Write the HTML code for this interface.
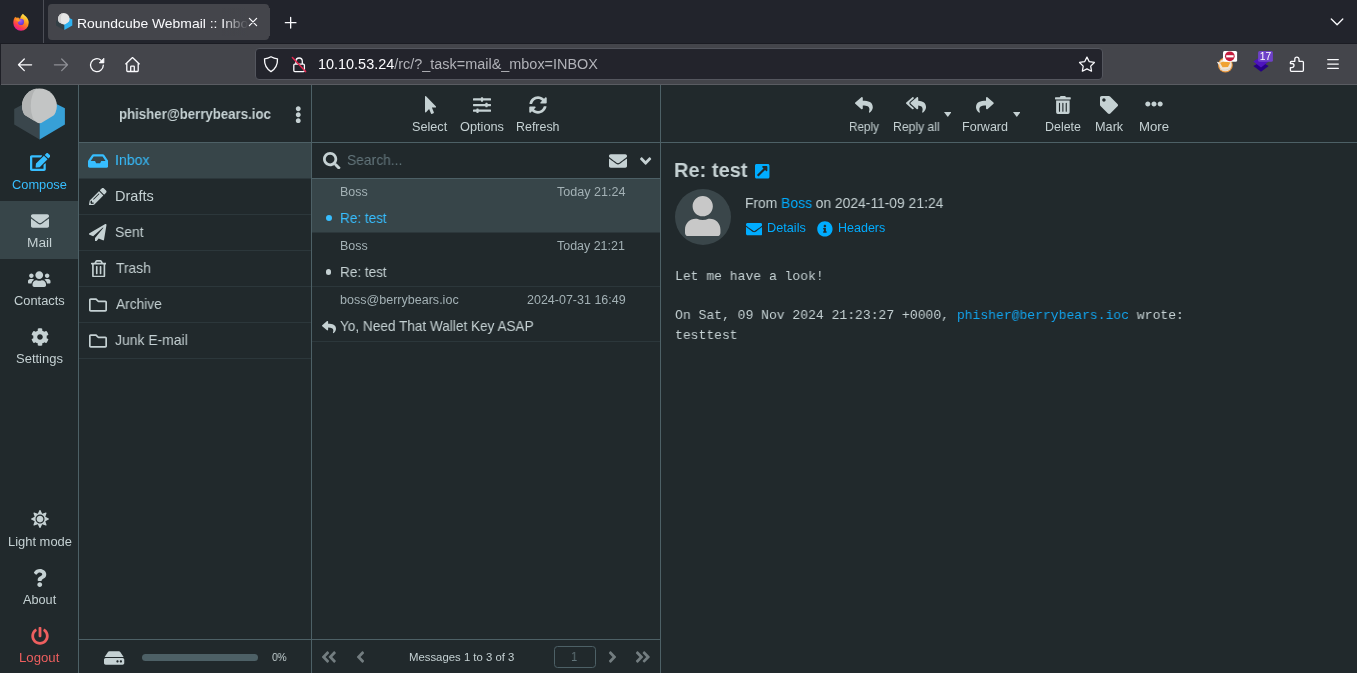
<!DOCTYPE html>
<html>
<head>
<meta charset="utf-8">
<title>Roundcube Webmail :: Inbox</title>
<style>
*{box-sizing:border-box;margin:0;padding:0}
html,body{width:1357px;height:673px;overflow:hidden;background:#21292c;font-family:"Liberation Sans",sans-serif;color:#c5d1d3}
.abs{position:absolute}
svg{display:block;position:absolute}
.tx{position:absolute;white-space:pre;transform-origin:0 0;will-change:transform}
#tabbar{position:absolute;left:0;top:0;width:1357px;height:44px;background:#22242c}
#tab{position:absolute;left:48px;top:4px;width:221px;height:36px;background:#44454b;border-radius:4px}
#tabfade{position:absolute;left:222px;top:8px;width:26px;height:28px;background:linear-gradient(90deg,rgba(68,69,75,0),#44454b)}
#tabclip{position:absolute;left:248px;top:8px;width:22px;height:28px;background:#44454b}
#navbar{position:absolute;left:0;top:44px;width:1357px;height:41px;background:#44454b;border-bottom:1px solid #5a5c62}
#urlbar{position:absolute;left:255px;top:48px;width:847.5px;height:32px;background:#23242c;border:1px solid #54565e;border-radius:4px}
#app{position:absolute;left:0;top:85px;width:1357px;height:588px;background:#21292c}
.vline{position:absolute;top:85px;width:1px;height:588px;background:#4d6066}
.hline{position:absolute;height:1px;background:#4d6066}
.folder{position:absolute;left:79px;width:232px;height:36px;border-bottom:1px solid #2c373b}
.row{position:absolute;left:312px;width:348px;height:54px;border-bottom:1px solid #2c373b}
</style>
</head>
<body>
<div id="tabbar"></div>
<div id="tab"></div>
<div id="navbar"></div>
<div id="urlbar"></div>
<div id="app"></div>
<div class="vline" style="left:78px"></div>
<div class="vline" style="left:311px"></div>
<div class="vline" style="left:660px"></div>
<div class="hline" style="left:79px;top:142px;width:1278px"></div>
<div class="hline" style="left:79px;top:639px;width:581px"></div>
<div class="hline" style="left:312px;top:178px;width:348px"></div>
<div class="abs" style="left:0;top:201px;width:78px;height:58px;background:#374549"></div>
<div class="folder" style="top:143px;background:#374549"></div>
<div class="folder" style="top:179px"></div>
<div class="folder" style="top:215px"></div>
<div class="folder" style="top:251px"></div>
<div class="folder" style="top:287px"></div>
<div class="folder" style="top:323px"></div>
<div class="abs" style="left:142px;top:653.600px;width:116.200px;height:7.400px;border-radius:4px;background:#4d6066"></div>
<div class="row" style="top:179px;background:#374549"></div>
<div class="row" style="top:233px"></div>
<div class="row" style="top:287px;height:55px"></div>
<div class="abs" style="left:554px;top:646px;width:42px;height:22px;border:1px solid #4d6066;border-radius:3.500px"></div>
<div class="abs" style="left:675px;top:189px;width:56px;height:56px;border-radius:28px;background:#3a464a"></div>
<div class="tx" style="left:77.33px;top:15.41px;font:normal 12.8px/17px 'Liberation Sans',sans-serif;color:#fbfbfe;transform:scaleX(1.0865)">Roundcube Webmail :: Inbox</div>
<div class="tx" style="left:317.79px;top:55.00px;font:normal 14px/18px 'Liberation Sans',sans-serif;color:#fbfbfe;transform:scaleX(1.0307)">10.10.53.24<span style="color:#b1b2b8">/rc/?_task=mail&amp;_mbox=INBOX</span></div>
<div class="tx" style="left:11.90px;top:177.02px;font:normal 12.5px/16px 'Liberation Sans',sans-serif;color:#37beff;transform:scaleX(1.0267)">Compose</div>
<div class="tx" style="left:26.64px;top:235.02px;font:normal 12.5px/16px 'Liberation Sans',sans-serif;color:#c5d1d3;transform:scaleX(1.0963)">Mail</div>
<div class="tx" style="left:13.70px;top:293.02px;font:normal 12.5px/16px 'Liberation Sans',sans-serif;color:#c5d1d3;transform:scaleX(1.0293)">Contacts</div>
<div class="tx" style="left:15.99px;top:351.02px;font:normal 12.5px/16px 'Liberation Sans',sans-serif;color:#c5d1d3;transform:scaleX(1.0394)">Settings</div>
<div class="tx" style="left:7.60px;top:534.02px;font:normal 12.5px/16px 'Liberation Sans',sans-serif;color:#c5d1d3;transform:scaleX(1.0338)">Light mode</div>
<div class="tx" style="left:22.98px;top:592.02px;font:normal 12.5px/16px 'Liberation Sans',sans-serif;color:#c5d1d3;transform:scaleX(1.0156)">About</div>
<div class="tx" style="left:19.08px;top:650.02px;font:normal 12.5px/16px 'Liberation Sans',sans-serif;color:#ee5f5f;transform:scaleX(1.0553)">Logout</div>
<div class="tx" style="left:119.37px;top:104.86px;font:bold 14.4px/19px 'Liberation Sans',sans-serif;color:#c5d1d3;transform:scaleX(0.9190)">phisher@berrybears.ioc</div>
<div class="tx" style="left:115.31px;top:150.86px;font:normal 14.4px/19px 'Liberation Sans',sans-serif;color:#37beff;transform:scaleX(0.9803)">Inbox</div>
<div class="tx" style="left:115.28px;top:186.86px;font:normal 14.4px/19px 'Liberation Sans',sans-serif;color:#c5d1d3;transform:scaleX(1.0085)">Drafts</div>
<div class="tx" style="left:115.32px;top:222.86px;font:normal 14.4px/19px 'Liberation Sans',sans-serif;color:#c5d1d3;transform:scaleX(0.9698)">Sent</div>
<div class="tx" style="left:116.24px;top:258.86px;font:normal 14.4px/19px 'Liberation Sans',sans-serif;color:#c5d1d3;transform:scaleX(0.9598)">Trash</div>
<div class="tx" style="left:116.25px;top:294.86px;font:normal 14.4px/19px 'Liberation Sans',sans-serif;color:#c5d1d3;transform:scaleX(0.9543)">Archive</div>
<div class="tx" style="left:115.32px;top:330.86px;font:normal 14.4px/19px 'Liberation Sans',sans-serif;color:#c5d1d3;transform:scaleX(0.9673)">Junk E-mail</div>
<div class="tx" style="left:271.82px;top:650.04px;font:normal 11px/14px 'Liberation Sans',sans-serif;color:#c5d1d3;transform:scaleX(0.9185)">0%</div>
<div class="tx" style="left:412.11px;top:119.05px;font:normal 12.4px/16px 'Liberation Sans',sans-serif;color:#c5d1d3;transform:scaleX(1.0223)">Select</div>
<div class="tx" style="left:459.71px;top:119.05px;font:normal 12.4px/16px 'Liberation Sans',sans-serif;color:#c5d1d3;transform:scaleX(1.0289)">Options</div>
<div class="tx" style="left:515.83px;top:119.05px;font:normal 12.4px/16px 'Liberation Sans',sans-serif;color:#c5d1d3;transform:scaleX(1.0034)">Refresh</div>
<div class="tx" style="left:347.33px;top:150.86px;font:normal 14.4px/19px 'Liberation Sans',sans-serif;color:#62747a;transform:scaleX(0.9622)">Search...</div>
<div class="tx" style="left:339.63px;top:184.19px;font:normal 12px/16px 'Liberation Sans',sans-serif;color:#a3b1b5;transform:scaleX(1.0394)">Boss</div>
<div class="tx" style="left:556.62px;top:184.19px;font:normal 12px/16px 'Liberation Sans',sans-serif;color:#a3b1b5;transform:scaleX(1.0472)">Today 21:24</div>
<div class="tx" style="left:339.55px;top:208.86px;font:normal 14.4px/19px 'Liberation Sans',sans-serif;color:#37beff;transform:scaleX(0.9396)">Re: test</div>
<div class="tx" style="left:339.63px;top:238.19px;font:normal 12px/16px 'Liberation Sans',sans-serif;color:#a3b1b5;transform:scaleX(1.0394)">Boss</div>
<div class="tx" style="left:556.63px;top:238.19px;font:normal 12px/16px 'Liberation Sans',sans-serif;color:#a3b1b5;transform:scaleX(1.0372)">Today 21:21</div>
<div class="tx" style="left:339.55px;top:262.86px;font:normal 14.4px/19px 'Liberation Sans',sans-serif;color:#c5d1d3;transform:scaleX(0.9396)">Re: test</div>
<div class="tx" style="left:339.62px;top:292.19px;font:normal 12px/16px 'Liberation Sans',sans-serif;color:#a3b1b5;transform:scaleX(1.0448)">boss@berrybears.ioc</div>
<div class="tx" style="left:526.73px;top:292.19px;font:normal 12px/16px 'Liberation Sans',sans-serif;color:#a3b1b5;transform:scaleX(1.0415)">2024-07-31 16:49</div>
<div class="tx" style="left:339.55px;top:316.86px;font:normal 14.4px/19px 'Liberation Sans',sans-serif;color:#c5d1d3;transform:scaleX(0.9443)">Yo, Need That Wallet Key ASAP</div>
<div class="tx" style="left:409.01px;top:649.97px;font:normal 11.2px/15px 'Liberation Sans',sans-serif;color:#c5d1d3;transform:scaleX(1.0148)">Messages 1 to 3 of 3</div>
<div class="tx" style="left:571.00px;top:649.02px;font:normal 12.5px/16px 'Liberation Sans',sans-serif;color:#62747a;transform:scaleX(0.9133)">1</div>
<div class="tx" style="left:848.78px;top:119.05px;font:normal 12.4px/16px 'Liberation Sans',sans-serif;color:#c5d1d3;transform:scaleX(0.9444)">Reply</div>
<div class="tx" style="left:892.65px;top:119.05px;font:normal 12.4px/16px 'Liberation Sans',sans-serif;color:#c5d1d3;transform:scaleX(0.9837)">Reply all</div>
<div class="tx" style="left:961.82px;top:119.05px;font:normal 12.4px/16px 'Liberation Sans',sans-serif;color:#c5d1d3;transform:scaleX(1.0124)">Forward</div>
<div class="tx" style="left:1044.93px;top:119.05px;font:normal 12.4px/16px 'Liberation Sans',sans-serif;color:#c5d1d3;transform:scaleX(1.0030)">Delete</div>
<div class="tx" style="left:1094.91px;top:119.05px;font:normal 12.4px/16px 'Liberation Sans',sans-serif;color:#c5d1d3;transform:scaleX(1.0250)">Mark</div>
<div class="tx" style="left:1138.98px;top:119.05px;font:normal 12.4px/16px 'Liberation Sans',sans-serif;color:#c5d1d3;transform:scaleX(1.0638)">More</div>
<div class="tx" style="left:674.10px;top:156.14px;font:bold 20.8px/27px 'Liberation Sans',sans-serif;color:#c5d1d3;transform:scaleX(0.9641)">Re: test</div>
<div class="tx" style="left:744.63px;top:193.86px;font:normal 14.4px/19px 'Liberation Sans',sans-serif;color:#c5d1d3;transform:scaleX(0.9618)">From <span style="color:#00acff">Boss</span> on 2024-11-09 21:24</div>
<div class="tx" style="left:766.81px;top:220.05px;font:normal 12.4px/16px 'Liberation Sans',sans-serif;color:#00acff;transform:scaleX(1.0256)">Details</div>
<div class="tx" style="left:837.72px;top:220.05px;font:normal 12.4px/16px 'Liberation Sans',sans-serif;color:#00acff;transform:scaleX(1.0090)">Headers</div>
<div class="tx" style="left:674.70px;top:306.73px;font:normal 13.6px/18px 'Liberation Mono',monospace;color:#c5d1d3;transform:scaleX(0.9596)">On Sat, 09 Nov 2024 21:23:27 +0000, <span style="color:#12a4ee">phisher@berrybears.ioc</span> wrote:</div>
<div class="tx" style="left:674.70px;top:267.73px;font:normal 13.6px/18px 'Liberation Mono',monospace;color:#c5d1d3;transform:scaleX(0.9596)">Let me have a look!</div>
<div class="tx" style="left:674.70px;top:326.73px;font:normal 13.6px/18px 'Liberation Mono',monospace;color:#c5d1d3;transform:scaleX(0.9596)">testtest</div>
<div id="tabfade"></div>
<div id="tabclip"></div>
<!-- chrome icons -->
<div class="abs" style="left:0;top:43px;width:1357px;height:1px;background:#1b1c23"></div>
<div class="abs" style="left:0;top:44px;width:1px;height:41px;background:#1e1f26"></div>
<div class="abs" style="left:43px;top:0;width:1px;height:43px;background:#4c4e56"></div>
<!-- firefox logo -->
<svg style="left:12px;top:13px" width="18" height="18" viewBox="0 0 18 18">
 <defs>
  <linearGradient id="ffg" x1="14.500" y1="1.500" x2="5" y2="17" gradientUnits="userSpaceOnUse"><stop offset="0" stop-color="#fff36b"/><stop offset="0.220" stop-color="#ffc42f"/><stop offset="0.480" stop-color="#ff8a20"/><stop offset="0.760" stop-color="#ff3f4a"/><stop offset="1" stop-color="#e0189c"/></linearGradient>
  <radialGradient id="ffp" cx="0.400" cy="0.300" r="0.800"><stop offset="0" stop-color="#a45cf0"/><stop offset="1" stop-color="#5a2fd0"/></radialGradient>
 </defs>
 <path d="M10.900 0.800C12 2.500 14 3 15.200 5C16.500 7 16.800 8.500 16.700 10A7.700 7.700 0 0 1 1.300 10C1.200 7.500 2 5.500 3.300 3.800C3.800 4.600 4.300 4.800 4.900 4.500C5.300 4.800 5.800 4.700 6.200 4.200C6.500 5.200 7.500 5.700 8.400 5.300C8.200 3.500 9.500 2.300 10.900 0.800Z" fill="url(#ffg)"/>
 <circle cx="8.900" cy="8.900" r="3.100" fill="url(#ffp)"/>
 <path d="M3.300 6.300C5 5.300 7.200 5.800 8.600 7.400C7.700 7.500 6.900 8 6.600 8.900C5.500 8.300 4.100 7.600 3.300 6.300z" fill="#ff9d24"/>
</svg>
<!-- favicon -->
<svg style="left:54px;top:11px" width="22" height="22" viewBox="54 11 22 22">
 <defs><clipPath id="fvc"><path d="M50 8H80V14.200L64.300 24.900L50 18.100z"/></clipPath></defs>
 <path d="M56 20.900L64.300 16.500V30.100L56 25.600z" fill="#333f45"/>
 <path d="M72.300 19.400L64.300 15.500V30.100L72.300 25.600z" fill="#2fb3f2"/>
 <g clip-path="url(#fvc)"><circle cx="63.800" cy="18.900" r="5.850" fill="#e6e6e6"/><path d="M63.800 13.050A5.850 5.850 0 0 0 63.800 24.750A3 5.850 0 0 1 63.800 13.050z" fill="#d4d4d4"/></g>
</svg>
<!-- close tab -->
<svg style="left:247px;top:16px" width="12" height="12" viewBox="0 0 12 12"><path d="M2.400 2.400l7.200 7.200M9.600 2.400l-7.200 7.200" stroke="#fbfbfe" stroke-width="1.25" fill="none" stroke-linecap="round"/></svg>
<!-- new tab -->
<svg style="left:283px;top:15px" width="15" height="15" viewBox="0 0 15 15"><path d="M7.650 2.400v10.600M2.350 7.700h10.600" stroke="#fbfbfe" stroke-width="1.300" fill="none" stroke-linecap="round"/></svg>
<!-- list all tabs chevron -->
<svg style="left:1329px;top:16px" width="16" height="12" viewBox="0 0 16 12"><path d="M2.300 3l5.800 5.800L13.800 3" stroke="#fbfbfe" stroke-width="1.300" fill="none" stroke-linecap="round" stroke-linejoin="round"/></svg>
<!-- back -->
<svg style="left:16px;top:56px" width="18" height="18" viewBox="0 0 18 18"><path d="M15.600 8.800H2.800M8.300 3L2.500 8.800l5.800 5.800" stroke="#fbfbfe" stroke-width="1.300" fill="none" stroke-linecap="round" stroke-linejoin="round"/></svg>
<!-- forward -->
<svg style="left:52px;top:56px" width="18" height="18" viewBox="0 0 18 18"><path d="M2.400 8.800h12.800M9.700 3l5.800 5.800-5.800 5.800" stroke="#8e8f95" stroke-width="1.300" fill="none" stroke-linecap="round" stroke-linejoin="round"/></svg>
<!-- reload -->
<svg style="left:88px;top:56px" width="18" height="18" viewBox="0 0 18 18"><path d="M15.300 9.200a6.400 6.400 0 1 1-2.300-5" stroke="#fbfbfe" stroke-width="1.300" fill="none" stroke-linecap="round"/><path d="M15.900 2.200v4.700h-4.700z" fill="#fbfbfe" stroke="#fbfbfe" stroke-width=".8" stroke-linejoin="round"/></svg>
<!-- home -->
<svg style="left:123px;top:55px" width="19" height="19" viewBox="0 0 19 19"><path d="M2.700 8.900l6.800-6.300 6.800 6.300M3.800 8.200v7.400c0 .5.400.9.900.9h9.600c.5 0 .9-.4.900-.9V8.200M7.700 16.300v-4.500c0-.4.300-.7.700-.7h2.200c.4 0 .7.300.7.700v4.500" stroke="#fbfbfe" stroke-width="1.300" fill="none" stroke-linecap="round" stroke-linejoin="round"/></svg>
<!-- shield -->
<svg style="left:262px;top:55px" width="18" height="19" viewBox="0 0 18 19"><path d="M9 1.700c2 1.200 4.200 1.900 6.500 2.100.2 5.600-1.800 10-6.500 12.800C4.300 13.800 2.300 9.400 2.500 3.800 4.800 3.600 7 2.900 9 1.700z" stroke="#fbfbfe" stroke-width="1.300" fill="none" stroke-linejoin="round"/></svg>
<!-- lock insecure -->
<svg style="left:290px;top:55px" width="18" height="19" viewBox="0 0 18 19"><path d="M4.800 9.200h8.600c.6 0 1 .4 1 1v5.400c0 .6-.4 1-1 1H4.800c-.6 0-1-.4-1-1v-5.400c0-.6.400-1 1-1zM5.900 9V6.200a3.200 3.200 0 0 1 6.400 0V9" stroke="#fbfbfe" stroke-width="1.300" fill="none" stroke-linejoin="round"/><path d="M2.400 2.600l13.200 14" stroke="#e22850" stroke-width="1.500" stroke-linecap="round"/></svg>
<!-- star -->
<svg style="left:1077px;top:54px" width="20" height="20" viewBox="0 0 20 20"><path d="M9.95 3.10L12.27 7.70L17.37 8.49L13.71 12.12L14.53 17.21L9.95 14.85L5.37 17.21L6.19 12.12L2.53 8.49L7.63 7.70z" stroke="#fbfbfe" stroke-width="1.250" fill="none" stroke-linejoin="round"/></svg>
<!-- ext 1 orange -->
<svg style="left:1212px;top:46px" width="30" height="34" viewBox="1212 46 30 34">
<circle cx="1225.400" cy="65" r="7.400" fill="#e8963c"/>
<circle cx="1225.400" cy="65" r="6.300" fill="#efe4d6"/>
<path d="M1220 62.800L1224.500 61.200L1230.300 62.600L1228 67L1222.500 67.300z" fill="#f0a233"/>
<path d="M1220 69.200C1223 70.600 1227.500 70.400 1230.300 68.300" stroke="#d9d4cc" stroke-width=".9" fill="none"/>
<path d="M1216.800 61.800L1219.800 62.600L1218.600 64.800z" fill="#f4f0ea"/>
<rect x="1223" y="50.900" width="14.100" height="10.800" rx="1.500" fill="#fff"/>
<circle cx="1229.800" cy="56.300" r="4.850" fill="#c51c3d"/>
<rect x="1226.200" y="55.200" width="7.400" height="2.200" fill="#fff"/>
</svg>
<!-- ext 2 purple -->
<svg style="left:1248px;top:46px;will-change:transform" width="30" height="34" viewBox="1248 46 30 34">
<path d="M1253.300 65.900L1261 61.800L1268.700 65.900L1261 71.800z" fill="#270085"/>
<path d="M1253.300 61.500L1261 56.500L1268.700 61.500L1261 67.600z" fill="#4e14be"/>
<rect x="1258.100" y="50.900" width="14.800" height="10.800" rx="1.500" fill="#6e41c8"/>
<text x="1265.500" y="60" font-family="Liberation Sans, sans-serif" font-size="10.300" fill="#fff" text-anchor="middle">17</text>
</svg>
<!-- puzzle -->
<svg style="left:1288px;top:54px" width="19" height="20" viewBox="0 0 19 20"><path d="M3.400 7.300h3.400V5.200a2.100 2.100 0 0 1 4.200 0v2.100h3.400c.6 0 1 .4 1 1v8c0 .6-.4 1-1 1H3.400c-.6 0-1-.4-1-1v-2.600h1.500a2.100 2.100 0 0 0 0-4.200H2.400V8.300c0-.6.400-1 1-1z" stroke="#fbfbfe" stroke-width="1.300" fill="none" stroke-linejoin="round"/></svg>
<!-- hamburger -->
<svg style="left:1325px;top:56px" width="16" height="16" viewBox="0 0 16 16"><path d="M2.700 3.600h10.600M2.700 8h10.600M2.700 12.400h10.600" stroke="#fbfbfe" stroke-width="1.250" fill="none" stroke-linecap="round"/></svg>


<svg style="left:10px;top:85px" width="60" height="58" viewBox="10 85 60 58">
<defs><clipPath id="lgc"><path d="M0 80H80V99.600L39.600 123.900L0 100.100z"/></clipPath></defs>
<path d="M14.200 108.900L39.600 95.500V139.400L14.200 124.400z" fill="#3a464c"/>
<path d="M64.900 108.300L39.600 95.500V139.400L64.900 124.600z" fill="#37a0d7"/>
<g clip-path="url(#lgc)"><circle cx="39.450" cy="105.900" r="17.400" fill="#c3c5c5"/><path d="M37.500 88.600A17.400 17.400 0 0 0 37.500 123.200A7.500 17.400 0 0 1 37.500 88.600z" fill="#b2b4b4"/></g>
</svg>
<svg style="left:29.58px;top:153.30px" width="20.25" height="18.00" viewBox="0 0 576 512"><path fill="#37beff" d="M402.6 83.2l90.2 90.2c3.8 3.8 3.8 10 0 13.8L274.4 405.6l-92.8 10.3c-12.4 1.4-22.9-9.1-21.5-21.5l10.3-92.8L388.8 83.2c3.8-3.8 10-3.8 13.8 0zm162-22.900l-48.800-48.800c-15.200-15.200-39.900-15.200-55.200 0l-35.400 35.400c-3.800 3.800-3.800 10 0 13.800l90.200 90.200c3.800 3.800 10 3.800 13.800 0l35.400-35.400c15.200-15.300 15.200-40 0-55.200zM384 346.200V448H64V128h229.800c3.200 0 6.200-1.300 8.500-3.500l40-40c7.600-7.600 2.200-20.500-8.500-20.500H48C21.500 64 0 85.500 0 112v352c0 26.500 21.500 48 48 48h352c26.500 0 48-21.500 48-48V306.200c0-10.700-12.900-16-20.500-8.500l-40 40c-2.200 2.300-3.500 5.300-3.500 8.500z"/></svg>
<svg style="left:30.50px;top:211.60px" width="18.00" height="18.00" viewBox="0 0 512 512"><path fill="#c5d1d3" d="M502.3 190.8c3.9-3.1 9.7-.2 9.7 4.7V400c0 26.5-21.5 48-48 48H48c-26.5 0-48-21.5-48-48V195.6c0-5 5.7-7.8 9.7-4.7 22.4 17.4 52.1 39.5 154.1 113.6 21.1 15.4 56.7 47.8 92.2 47.6 35.7.3 72-32.8 92.3-47.6 102-74.1 131.6-96.3 154-113.7zM256 320c23.2.4 56.6-29.2 73.4-41.4 132.7-96.3 142.8-104.7 173.4-128.7 5.8-4.5 9.2-11.5 9.2-18.9v-19c0-26.5-21.5-48-48-48H48C21.5 64 0 85.5 0 112v19c0 7.4 3.4 14.3 9.2 18.9 30.6 23.9 40.7 32.4 173.4 128.7 16.8 12.2 50.2 41.8 73.4 41.4z"/></svg>
<svg style="left:28.25px;top:269.90px" width="22.50" height="18.00" viewBox="0 0 640 512"><path fill="#c5d1d3" d="M96 224c35.3 0 64-28.7 64-64s-28.7-64-64-64-64 28.7-64 64 28.7 64 64 64zm448 0c35.3 0 64-28.7 64-64s-28.7-64-64-64-64 28.7-64 64 28.7 64 64 64zm32 32h-64c-17.6 0-33.5 7.1-45.1 18.6 40.3 22.1 68.9 62 75.1 109.4h66c17.7 0 32-14.3 32-32v-32c0-35.3-28.7-64-64-64zm-256 0c61.9 0 112-50.1 112-112S381.9 32 320 32 208 82.1 208 144s50.1 112 112 112zm76.8 32h-8.3c-20.8 10-43.9 16-68.5 16s-47.6-6-68.5-16h-8.3C179.6 288 128 339.6 128 403.2V432c0 26.5 21.5 48 48 48h288c26.5 0 48-21.5 48-48v-28.8c0-63.6-51.6-115.2-115.2-115.2zm-223.7-13.4C161.5 263.1 145.600 256 128 256H64c-35.3 0-64 28.700-64 64v32c0 17.700 14.300 32 32 32h65.900c6.300-47.400 34.900-87.300 75.200-109.400z"/></svg>
<svg style="left:30.50px;top:327.70px" width="18.00" height="18.00" viewBox="0 0 512 512"><path fill="#c5d1d3" d="M487.4 315.7l-42.6-24.6c4.3-23.2 4.3-47 0-70.2l42.6-24.6c4.9-2.8 7.1-8.6 5.5-14-11.1-35.6-30-67.8-54.7-94.6-3.8-4.1-10-5.1-14.8-2.3L380.8 110c-17.9-15.4-38.5-27.3-60.8-35.1V25.8c0-5.6-3.9-10.5-9.4-11.7-36.7-8.2-74.3-7.8-109.2 0-5.5 1.2-9.4 6.1-9.4 11.7V75c-22.2 7.9-42.8 19.8-60.8 35.1L88.7 85.5c-4.9-2.8-11-1.9-14.8 2.3-24.7 26.7-43.6 58.9-54.7 94.6-1.7 5.4.6 11.2 5.5 14L67.3 221c-4.3 23.2-4.3 47 0 70.2l-42.6 24.6c-4.9 2.8-7.1 8.6-5.5 14 11.1 35.6 30 67.8 54.7 94.6 3.8 4.1 10 5.1 14.8 2.3l42.6-24.6c17.9 15.4 38.5 27.3 60.8 35.1v49.2c0 5.6 3.9 10.5 9.4 11.7 36.7 8.2 74.3 7.8 109.2 0 5.5-1.2 9.4-6.1 9.4-11.7v-49.2c22.2-7.9 42.8-19.8 60.8-35.1l42.6 24.6c4.9 2.8 11 1.9 14.8-2.3 24.7-26.7 43.6-58.9 54.7-94.6 1.5-5.5-.7-11.3-5.6-14.1zM256 336c-44.1 0-80-35.9-80-80s35.9-80 80-80 80 35.9 80 80-35.9 80-80 80z"/></svg>
<svg style="left:30.60px;top:510.30px" width="18.00" height="18.00" viewBox="0 0 512 512"><path fill="#c5d1d3" d="M256 160c-52.9 0-96 43.1-96 96s43.1 96 96 96 96-43.1 96-96-43.1-96-96-96zm246.4 80.5l-94.7-47.3 33.5-100.4c4.5-13.6-8.4-26.5-21.9-21.9l-100.4 33.5-47.400-94.800c-6.400-12.800-24.600-12.800-31 0l-47.300 94.700L92.700 70.800c-13.600-4.500-26.500 8.400-21.900 21.900l33.500 100.400-94.700 47.400c-12.800 6.400-12.800 24.600 0 31l94.700 47.300-33.500 100.500c-4.500 13.600 8.400 26.500 21.900 21.900l100.400-33.500 47.300 94.700c6.400 12.800 24.600 12.800 31 0l47.300-94.700 100.400 33.500c13.600 4.500 26.500-8.400 21.900-21.900l-33.500-100.400 94.700-47.300c13-6.500 13-24.700.2-31.100zm-155.900 106c-49.900 49.900-131.100 49.900-181 0-49.900-49.900-49.900-131.100 0-181 49.900-49.900 131.100-49.900 181 0 49.900 49.900 49.900 131.100 0 181z"/></svg>
<svg style="left:33.05px;top:568.50px" width="13.50" height="18.00" viewBox="0 0 384 512"><path fill="#c5d1d3" d="M202.021 0C122.202 0 70.503 32.703 29.914 91.026c-7.363 10.58-5.093 25.086 5.178 32.874l43.138 32.709c10.373 7.865 25.132 6.026 33.253-4.148 25.049-31.381 43.63-49.449 82.757-49.449 30.764 0 68.816 19.799 68.816 49.631 0 22.552-18.617 34.134-48.993 51.164-35.423 19.86-82.299 44.576-82.299 106.405V320c0 13.255 10.745 24 24 24h72.471c13.255 0 24-10.745 24-24v-5.773c0-42.86 125.268-44.645 125.268-160.627C377.504 66.256 286.902 0 202.021 0zM192 373.459c-38.196 0-69.271 31.075-69.271 69.271 0 38.195 31.075 69.27 69.271 69.27s69.271-31.075 69.271-69.271-31.075-69.27-69.271-69.27z"/></svg>
<svg style="left:30.60px;top:626.60px" width="18.00" height="18.00" viewBox="0 0 512 512"><path fill="#ee5f5f" d="M400 54.1c63 45 104 118.6 104 201.9 0 136.8-110.8 247.7-247.5 248C120 504.3 8.2 393 8 256.4 7.9 173.1 48.9 99.3 111.8 54.2c11.7-8.3 28-4.8 35 7.7L162.600 90c5.900 10.500 3.100 23.800-6.600 31-41.500 30.800-68 79.600-68 134.900-.100 92.300 74.500 168.100 168 168.100 91.600 0 168.600-74.200 168-169.100-.300-51.800-24.700-101.800-68.100-134-9.700-7.200-12.400-20.500-6.500-30.900l15.800-28.100c7-12.400 23.200-16.100 34.800-7.800zM296 264V24c0-13.300-10.700-24-24-24h-32c-13.300 0-24 10.700-24 24v240c0 13.300 10.700 24 24 24h32c13.300 0 24-10.700 24-24z"/></svg>
<svg style="left:295.49px;top:106.00px" width="6.52" height="17.40" viewBox="0 0 192 512"><path fill="#c5d1d3" d="M96 184c39.8 0 72 32.2 72 72s-32.2 72-72 72-72-32.2-72-72 32.2-72 72-72zM24 80c0 39.8 32.2 72 72 72s72-32.2 72-72S135.800 8 96 8 24 40.200 24 80zm0 352c0 39.800 32.200 72 72 72s72-32.200 72-72-32.200-72-72-72-72 32.200-72 72z"/></svg>
<svg style="left:88.17px;top:151.70px" width="20.25" height="18.00" viewBox="0 0 576 512"><path fill="#37beff" d="M567.938 243.908L462.25 85.374A48.003 48.003 0 0 0 422.311 64H153.689a48 48 0 0 0-39.938 21.374L8.062 243.908A47.994 47.994 0 0 0 0 270.533V400c0 26.51 21.49 48 48 48h480c26.51 0 48-21.49 48-48V270.533a47.994 47.994 0 0 0-8.062-26.625zM162.252 128h251.497l85.333 128H376l-32 64H232l-32-64H76.918l85.334-128z"/></svg>
<svg style="left:89.45px;top:187.95px" width="17.50" height="17.50" viewBox="0 0 512 512"><path fill="#c5d1d3" d="M497.9 142.1l-46.1 46.1c-4.7 4.7-12.3 4.7-17 0l-111-111c-4.7-4.7-4.7-12.3 0-17l46.1-46.1c18.7-18.7 49.1-18.7 67.9 0l60.1 60.1c18.8 18.7 18.8 49.1 0 67.900zM284.200 99.800L21.600 362.400.400 483.900c-2.900 16.400 11.400 30.600 27.800 27.800l121.500-21.300 262.600-262.600c4.700-4.700 4.700-12.300 0-17l-111-111c-4.800-4.700-12.400-4.700-17.100 0zM124.100 339.900c-5.500-5.500-5.500-14.300 0-19.800l154-154c5.500-5.500 14.300-5.500 19.800 0s5.500 14.300 0 19.800l-154 154c-5.500 5.500-14.300 5.500-19.800 0zM88 424h48v36.300l-64.500 11.300-31.100-31.100L51.700 376H88v48z"/></svg>
<svg style="left:89.45px;top:223.55px" width="17.50" height="17.50" viewBox="0 0 512 512"><path fill="#c5d1d3" d="M476 3.2L12.5 270.6c-18.1 10.4-15.8 35.6 2.2 43.2L121 358.4l287.3-253.2c5.5-4.9 13.3 2.6 8.6 8.3L176 407v80.5c0 23.6 28.5 32.9 42.5 15.8L282 426l124.6 52.2c14.2 6 30.4-2.9 33-18.2l72-432C515 7.8 493.3-6.8 476 3.2z"/></svg>
<svg style="left:90.84px;top:259.75px" width="15.31" height="17.50" viewBox="0 0 448 512"><path fill="#c5d1d3" d="M268 416h24a12 12 0 0 0 12-12V188a12 12 0 0 0-12-12h-24a12 12 0 0 0-12 12v216a12 12 0 0 0 12 12zM432 80h-82.41l-34-56.7A48 48 0 0 0 274.41 0H173.59a48 48 0 0 0-41.16 23.3L98.41 80H16A16 16 0 0 0 0 96v16a16 16 0 0 0 16 16h16v336a48 48 0 0 0 48 48h288a48 48 0 0 0 48-48V128h16a16 16 0 0 0 16-16V96a16 16 0 0 0-16-16zM171.84 50.91A6 6 0 0 1 177 48h94a6 6 0 0 1 5.15 2.91L293.61 80H154.39zM368 464H80V128h288zm-212-48h24a12 12 0 0 0 12-12V188a12 12 0 0 0-12-12h-24a12 12 0 0 0-12 12v216a12 12 0 0 0 12 12z"/></svg>
<svg style="left:89.10px;top:295.50px" width="18.00" height="18.00" viewBox="0 0 512 512"><path fill="#c5d1d3" d="M464 128H272l-54.63-54.63c-6-6-14.14-9.37-22.63-9.37H48C21.49 64 0 85.49 0 112v288c0 26.51 21.49 48 48 48h416c26.51 0 48-21.49 48-48V176c0-26.51-21.49-48-48-48zm0 272H48V112h140.12l54.63 54.63c6 6 14.14 9.37 22.63 9.37H464v224z"/></svg>
<svg style="left:89.10px;top:331.50px" width="18.00" height="18.00" viewBox="0 0 512 512"><path fill="#c5d1d3" d="M464 128H272l-54.63-54.63c-6-6-14.14-9.37-22.63-9.37H48C21.49 64 0 85.49 0 112v288c0 26.51 21.49 48 48 48h416c26.51 0 48-21.49 48-48V176c0-26.51-21.49-48-48-48zm0 272H48V112h140.12l54.63 54.63c6 6 14.14 9.37 22.63 9.37H464v224z"/></svg>
<svg style="left:104.28px;top:648.50px" width="20.25" height="18.00" viewBox="0 0 576 512"><path fill="#c5d1d3" d="M576 304v96c0 26.51-21.49 48-48 48H48c-26.51 0-48-21.49-48-48v-96c0-26.51 21.49-48 48-48h480c26.51 0 48 21.49 48 48zm-48-80a79.557 79.557 0 0 1 30.777 6.165L462.25 85.374A48.003 48.003 0 0 0 422.311 64H153.689a48 48 0 0 0-39.938 21.374L17.223 230.165A79.557 79.557 0 0 1 48 224h480zm-48 96c-17.673 0-32 14.327-32 32s14.327 32 32 32 32-14.327 32-32-14.327-32-32-32zm-96 0c-17.673 0-32 14.327-32 32s14.327 32 32 32 32-14.327 32-32-14.327-32-32-32z"/></svg>
<svg style="left:424.68px;top:95.50px" width="11.25" height="18.00" viewBox="0 0 320 512"><path fill="#c5d1d3" d="M302.189 329.126H196.105l55.831 135.993c3.889 9.428-.555 19.999-9.444 23.999l-49.165 21.427c-9.165 4-19.443-.571-23.332-9.714l-53.053-129.136-86.664 89.138C18.729 472.71 0 463.554 0 447.977V18.299C0 1.899 19.921-6.096 30.277 5.443l284.412 292.542c11.472 11.179 3.007 31.141-12.5 31.141z"/></svg>
<svg style="left:472.90px;top:95.60px" width="18.00" height="18.00" viewBox="0 0 512 512"><path fill="#c5d1d3" d="M496 384H160v-16c0-8.8-7.2-16-16-16h-32c-8.8 0-16 7.2-16 16v16H16c-8.8 0-16 7.2-16 16v32c0 8.8 7.2 16 16 16h80v16c0 8.8 7.2 16 16 16h32c8.8 0 16-7.2 16-16v-16h336c8.8 0 16-7.2 16-16v-32c0-8.8-7.2-16-16-16zm0-160h-80v-16c0-8.8-7.2-16-16-16h-32c-8.8 0-16 7.2-16 16v16H16c-8.8 0-16 7.2-16 16v32c0 8.8 7.2 16 16 16h336v16c0 8.8 7.2 16 16 16h32c8.8 0 16-7.2 16-16v-16h80c8.8 0 16-7.2 16-16v-32c0-8.8-7.2-16-16-16zm0-160H288V48c0-8.8-7.2-16-16-16h-32c-8.8 0-16 7.2-16 16v16H16C7.2 64 0 71.2 0 80v32c0 8.8 7.2 16 16 16h208v16c0 8.8 7.2 16 16 16h32c8.8 0 16-7.2 16-16v-16h208c8.800 0 16-7.200 16-16V80c0-8.800-7.200-16-16-16z"/></svg>
<svg style="left:528.70px;top:95.50px" width="18.00" height="18.00" viewBox="0 0 512 512"><path fill="#c5d1d3" d="M370.72 133.28C339.458 104.008 298.888 87.962 255.848 88c-77.458.068-144.328 53.178-162.791 126.85-1.344 5.363-6.122 9.15-11.651 9.15H24.103c-7.498 0-13.194-6.807-11.807-14.176C33.933 94.924 134.813 8 256 8c66.448 0 126.791 26.136 171.315 68.685L463.03 40.97C478.149 25.851 504 36.559 504 57.941V192c0 13.255-10.745 24-24 24H345.941c-21.382 0-32.09-25.851-16.971-40.971l41.75-41.749zM32 296h134.059c21.382 0 32.09 25.851 16.971 40.971l-41.75 41.75c31.262 29.273 71.835 45.319 114.876 45.28 77.418-.07 144.315-53.144 162.787-126.849 1.344-5.363 6.122-9.15 11.651-9.15h57.304c7.498 0 13.194 6.807 11.807 14.176C478.067 417.076 377.187 504 256 504c-66.448 0-126.791-26.136-171.315-68.685L48.97 471.03C33.851 486.149 8 475.441 8 454.059V320c0-13.255 10.745-24 24-24z"/></svg>
<svg style="left:323.05px;top:151.85px" width="17.50" height="17.50" viewBox="0 0 512 512"><path fill="#c5d1d3" d="M505 442.7L405.3 343c-4.5-4.5-10.6-7-17-7H372c27.6-35.3 44-79.7 44-128C416 93.1 322.9 0 208 0S0 93.1 0 208s93.1 208 208 208c48.3 0 92.7-16.4 128-44v16.3c0 6.4 2.5 12.5 7 17l99.7 99.7c9.4 9.4 24.6 9.4 33.9 0l28.3-28.3c9.4-9.4 9.4-24.6.1-34zM208 336c-70.7 0-128-57.2-128-128 0-70.7 57.2-128 128-128 70.7 0 128 57.2 128 128 0 70.7-57.2 128-128 128z"/></svg>
<svg style="left:609.00px;top:151.50px" width="18.00" height="18.00" viewBox="0 0 512 512"><path fill="#c5d1d3" d="M502.3 190.8c3.9-3.1 9.7-.2 9.7 4.7V400c0 26.5-21.5 48-48 48H48c-26.5 0-48-21.5-48-48V195.6c0-5 5.7-7.8 9.7-4.7 22.4 17.4 52.1 39.5 154.1 113.6 21.1 15.4 56.7 47.8 92.2 47.6 35.7.3 72-32.8 92.3-47.6 102-74.1 131.6-96.3 154-113.7zM256 320c23.2.4 56.6-29.2 73.4-41.4 132.7-96.3 142.8-104.7 173.4-128.7 5.8-4.5 9.2-11.5 9.2-18.9v-19c0-26.5-21.5-48-48-48H48C21.5 64 0 85.5 0 112v19c0 7.4 3.4 14.3 9.2 18.9 30.6 23.9 40.7 32.4 173.4 128.7 16.8 12.2 50.2 41.8 73.4 41.4z"/></svg>
<svg style="left:640.48px;top:151.60px" width="11.25" height="18.00" viewBox="0 0 320 512"><path fill="#c5d1d3" d="M143 352.3L7 216.3c-9.4-9.4-9.4-24.6 0-33.9l22.6-22.6c9.4-9.4 24.6-9.4 33.9 0l96.4 96.4 96.4-96.4c9.4-9.4 24.6-9.4 33.9 0l22.6 22.6c9.4 9.4 9.4 24.6 0 33.9l-136 136c-9.2 9.4-24.4 9.4-33.8 0z"/></svg>
<div class="abs" style="left:326.200px;top:215.200px;width:5.600px;height:5.600px;border-radius:3px;background:#37beff"></div>
<div class="abs" style="left:325.800px;top:269.200px;width:5.600px;height:5.600px;border-radius:3px;background:#c5d1d3"></div>
<svg style="left:322.00px;top:319.80px" width="14.00" height="14.00" viewBox="0 0 512 512"><path fill="#c5d1d3" d="M8.309 189.836L184.313 37.851C199.719 24.546 224 35.347 224 56.015v80.053c160.629 1.839 288 34.032 288 186.258 0 61.441-39.581 122.309-83.333 154.132-13.653 9.931-33.111-2.533-28.077-18.631 45.344-145.012-21.507-183.51-176.59-185.742V360c0 20.7-24.3 31.453-39.687 18.164l-176.004-152c-11.071-9.562-11.086-26.753 0-36.328z"/></svg>
<svg style="left:321.12px;top:648.40px" width="15.75" height="18.00" viewBox="0 0 448 512"><path fill="#737d80" d="M223.7 239l136-136c9.4-9.4 24.6-9.4 33.9 0l22.6 22.6c9.4 9.4 9.4 24.6 0 33.9L319.9 256l96.4 96.4c9.4 9.4 9.4 24.6 0 33.9L393.7 409c-9.4 9.4-24.6 9.4-33.9 0l-136-136c-9.5-9.4-9.5-24.6-.1-34zm-192 34l136 136c9.4 9.4 24.6 9.4 33.9 0l22.6-22.6c9.4-9.4 9.4-24.6 0-33.9L127.9 256l96.4-96.4c9.4-9.4 9.4-24.6 0-33.9L201.7 103c-9.4-9.4-24.6-9.4-33.9 0l-136 136c-9.5 9.4-9.5 24.6-.1 34z"/></svg>
<svg style="left:355.50px;top:648.40px" width="9.00" height="18.00" viewBox="0 0 256 512"><path fill="#737d80" d="M31.7 239l136-136c9.4-9.4 24.6-9.4 33.9 0l22.6 22.6c9.4 9.4 9.4 24.6 0 33.9L127.9 256l96.4 96.4c9.4 9.4 9.4 24.6 0 33.9L201.7 409c-9.4 9.4-24.6 9.4-33.9 0l-136-136c-9.5-9.4-9.5-24.6-.1-34z"/></svg>
<svg style="left:608.00px;top:648.40px" width="9.00" height="18.00" viewBox="0 0 256 512"><path fill="#737d80" d="M224.3 273l-136 136c-9.4 9.4-24.6 9.4-33.9 0l-22.6-22.6c-9.4-9.4-9.4-24.6 0-33.9l96.4-96.4-96.4-96.4c-9.4-9.4-9.4-24.6 0-33.9L54.3 103c9.4-9.4 24.6-9.4 33.9 0l136 136c9.5 9.4 9.5 24.6.1 34z"/></svg>
<svg style="left:635.23px;top:648.40px" width="15.75" height="18.00" viewBox="0 0 448 512"><path fill="#737d80" d="M224.3 273l-136 136c-9.4 9.4-24.6 9.4-33.9 0l-22.6-22.6c-9.4-9.4-9.4-24.6 0-33.9l96.4-96.4-96.4-96.4c-9.4-9.4-9.4-24.6 0-33.9L54.3 103c9.4-9.4 24.6-9.4 33.9 0l136 136c9.5 9.4 9.5 24.6.1 34zm192-34l-136-136c-9.4-9.4-24.6-9.4-33.9 0l-22.6 22.6c-9.4 9.4-9.4 24.6 0 33.9l96.4 96.4-96.4 96.4c-9.4 9.4-9.4 24.6 0 33.9l22.6 22.6c9.4 9.4 24.6 9.4 33.9 0l136-136c9.4-9.2 9.4-24.400 0-33.800z"/></svg>
<svg style="left:855.30px;top:95.70px" width="17.80" height="17.80" viewBox="0 0 512 512"><path fill="#c5d1d3" d="M8.309 189.836L184.313 37.851C199.719 24.546 224 35.347 224 56.015v80.053c160.629 1.839 288 34.032 288 186.258 0 61.441-39.581 122.309-83.333 154.132-13.653 9.931-33.111-2.533-28.077-18.631 45.344-145.012-21.507-183.51-176.59-185.742V360c0 20.7-24.3 31.453-39.687 18.164l-176.004-152c-11.071-9.562-11.086-26.753 0-36.328z"/></svg>
<svg style="left:906.29px;top:95.70px" width="20.03" height="17.80" viewBox="0 0 576 512"><path fill="#c5d1d3" d="M136.309 189.836L312.313 37.851C327.72 24.546 352 35.348 352 56.015v82.763c129.182 10.231 224 52.212 224 183.548 0 61.441-39.582 122.309-83.333 154.132-13.653 9.931-33.111-2.533-28.077-18.631 38.512-123.162-3.922-169.482-112.59-182.015v84.175c0 20.701-24.3 31.453-39.687 18.164L136.309 226.164c-11.071-9.561-11.086-26.753 0-36.328zm-128 36.328L184.313 378.15C199.7 391.439 224 380.687 224 359.986v-15.818l-108.606-93.785A55.96 55.96 0 0 1 96 207.998a55.953 55.953 0 0 1 19.393-42.38L224 71.832V56.015c0-20.667-24.28-31.469-39.687-18.164L8.309 189.836c-11.086 9.575-11.071 26.767 0 36.328z"/></svg>
<svg style="left:976.40px;top:95.70px" width="17.80" height="17.80" viewBox="0 0 512 512"><path fill="#c5d1d3" d="M503.691 189.836L327.687 37.851C312.281 24.546 288 35.347 288 56.015v80.053C127.371 137.907 0 170.1 0 322.326c0 61.441 39.581 122.309 83.333 154.132 13.653 9.931 33.111-2.533 28.077-18.631C66.066 312.814 132.917 274.316 288 272.085V360c0 20.7 24.3 31.453 39.687 18.164l176.004-152c11.071-9.562 11.086-26.753 0-36.328z"/></svg>
<svg style="left:1054.83px;top:95.60px" width="15.75" height="18.00" viewBox="0 0 448 512"><path fill="#c5d1d3" d="M32 464a48 48 0 0 0 48 48h288a48 48 0 0 0 48-48V128H32zm272-256a16 16 0 0 1 32 0v224a16 16 0 0 1-32 0zm-96 0a16 16 0 0 1 32 0v224a16 16 0 0 1-32 0zm-96 0a16 16 0 0 1 32 0v224a16 16 0 0 1-32 0zM432 32H312l-9.4-18.7A24 24 0 0 0 281.1 0H166.8a23.72 23.72 0 0 0-21.4 13.3L136 32H16A16 16 0 0 0 0 48v32a16 16 0 0 0 16 16h416a16 16 0 0 0 16-16V48a16 16 0 0 0-16-16z"/></svg>
<svg style="left:1100.10px;top:95.60px" width="18.00" height="18.00" viewBox="0 0 512 512"><path fill="#c5d1d3" d="M0 252.118V48C0 21.49 21.49 0 48 0h204.118a48 48 0 0 1 33.941 14.059l211.882 211.882c18.745 18.745 18.745 49.137 0 67.882L293.823 497.941c-18.745 18.745-49.137 18.745-67.882 0L14.059 286.059A48 48 0 0 1 0 252.118zM112 64c-26.51 0-48 21.49-48 48s21.49 48 48 48 48-21.49 48-48-21.49-48-48-48z"/></svg>
<svg style="left:1144.90px;top:95.30px" width="18.00" height="18.00" viewBox="0 0 512 512"><path fill="#c5d1d3" d="M328 256c0 39.8-32.2 72-72 72s-72-32.2-72-72 32.2-72 72-72 72 32.2 72 72zm104-72c-39.8 0-72 32.2-72 72s32.2 72 72 72 72-32.2 72-72-32.2-72-72-72zm-352 0c-39.8 0-72 32.2-72 72s32.2 72 72 72 72-32.2 72-72-32.2-72-72-72z"/></svg>
<svg style="left:943.900px;top:112.300px" width="7.600" height="5" viewBox="0 0 76 50"><path d="M0 0H76L38 50z" fill="#c5d1d3"/></svg>
<svg style="left:1012.600px;top:112.300px" width="7.600" height="5" viewBox="0 0 76 50"><path d="M0 0H76L38 50z" fill="#c5d1d3"/></svg>
<svg style="left:755.08px;top:162.95px" width="14.44" height="16.50" viewBox="0 0 448 512"><path fill="#00acff" d="M448 80v352c0 26.51-21.49 48-48 48H48c-26.51 0-48-21.49-48-48V80c0-26.51 21.49-48 48-48h352c26.51 0 48 21.49 48 48zm-88 16H248.029c-21.313 0-32.08 25.861-16.971 40.971l31.984 31.987L67.515 364.485c-4.686 4.686-4.686 12.284 0 16.971l31.029 31.029c4.687 4.686 12.285 4.686 16.971 0l195.526-195.526 31.988 31.991C358.058 263.977 384 253.425 384 231.979V120c0-13.255-10.745-24-24-24z"/></svg>
<svg style="left:685.38px;top:195.55px" width="35.44" height="40.50" viewBox="0 0 448 512"><path fill="#c8c8c8" d="M224 256c70.7 0 128-57.3 128-128S294.7 0 224 0 96 57.3 96 128s57.3 128 128 128zm89.6 32h-16.7c-22.2 10.2-46.9 16-72.9 16s-50.6-5.8-72.9-16h-16.7C60.2 288 0 348.2 0 422.4V464c0 26.5 21.5 48 48 48h352c26.5 0 48-21.5 48-48v-41.6c0-74.2-60.2-134.4-134.4-134.4z"/></svg>
<svg style="left:746.15px;top:220.85px" width="16.30" height="16.30" viewBox="0 0 512 512"><path fill="#00acff" d="M502.3 190.8c3.9-3.1 9.7-.2 9.7 4.7V400c0 26.5-21.5 48-48 48H48c-26.5 0-48-21.5-48-48V195.6c0-5 5.7-7.8 9.7-4.7 22.4 17.4 52.1 39.5 154.1 113.6 21.1 15.4 56.7 47.8 92.2 47.6 35.7.3 72-32.8 92.3-47.6 102-74.1 131.6-96.3 154-113.7zM256 320c23.2.4 56.6-29.2 73.4-41.4 132.7-96.3 142.8-104.7 173.4-128.7 5.8-4.5 9.2-11.5 9.2-18.9v-19c0-26.5-21.5-48-48-48H48C21.5 64 0 85.5 0 112v19c0 7.4 3.4 14.3 9.2 18.9 30.6 23.9 40.7 32.4 173.4 128.7 16.8 12.2 50.2 41.8 73.4 41.4z"/></svg>
<svg style="left:817.40px;top:220.90px" width="15.80" height="15.80" viewBox="0 0 512 512"><path fill="#00acff" d="M256 8C119.043 8 8 119.083 8 256c0 136.997 111.043 248 248 248s248-111.003 248-248C504 119.083 392.957 8 256 8zm0 110c23.196 0 42 18.804 42 42s-18.804 42-42 42-42-18.804-42-42 18.804-42 42-42zm56 254c0 6.627-5.373 12-12 12h-88c-6.627 0-12-5.373-12-12v-24c0-6.627 5.373-12 12-12h12v-64h-12c-6.627 0-12-5.373-12-12v-24c0-6.627 5.373-12 12-12h64c6.627 0 12 5.373 12 12v100h12c6.627 0 12 5.373 12 12v24z"/></svg>
</body>
</html>
